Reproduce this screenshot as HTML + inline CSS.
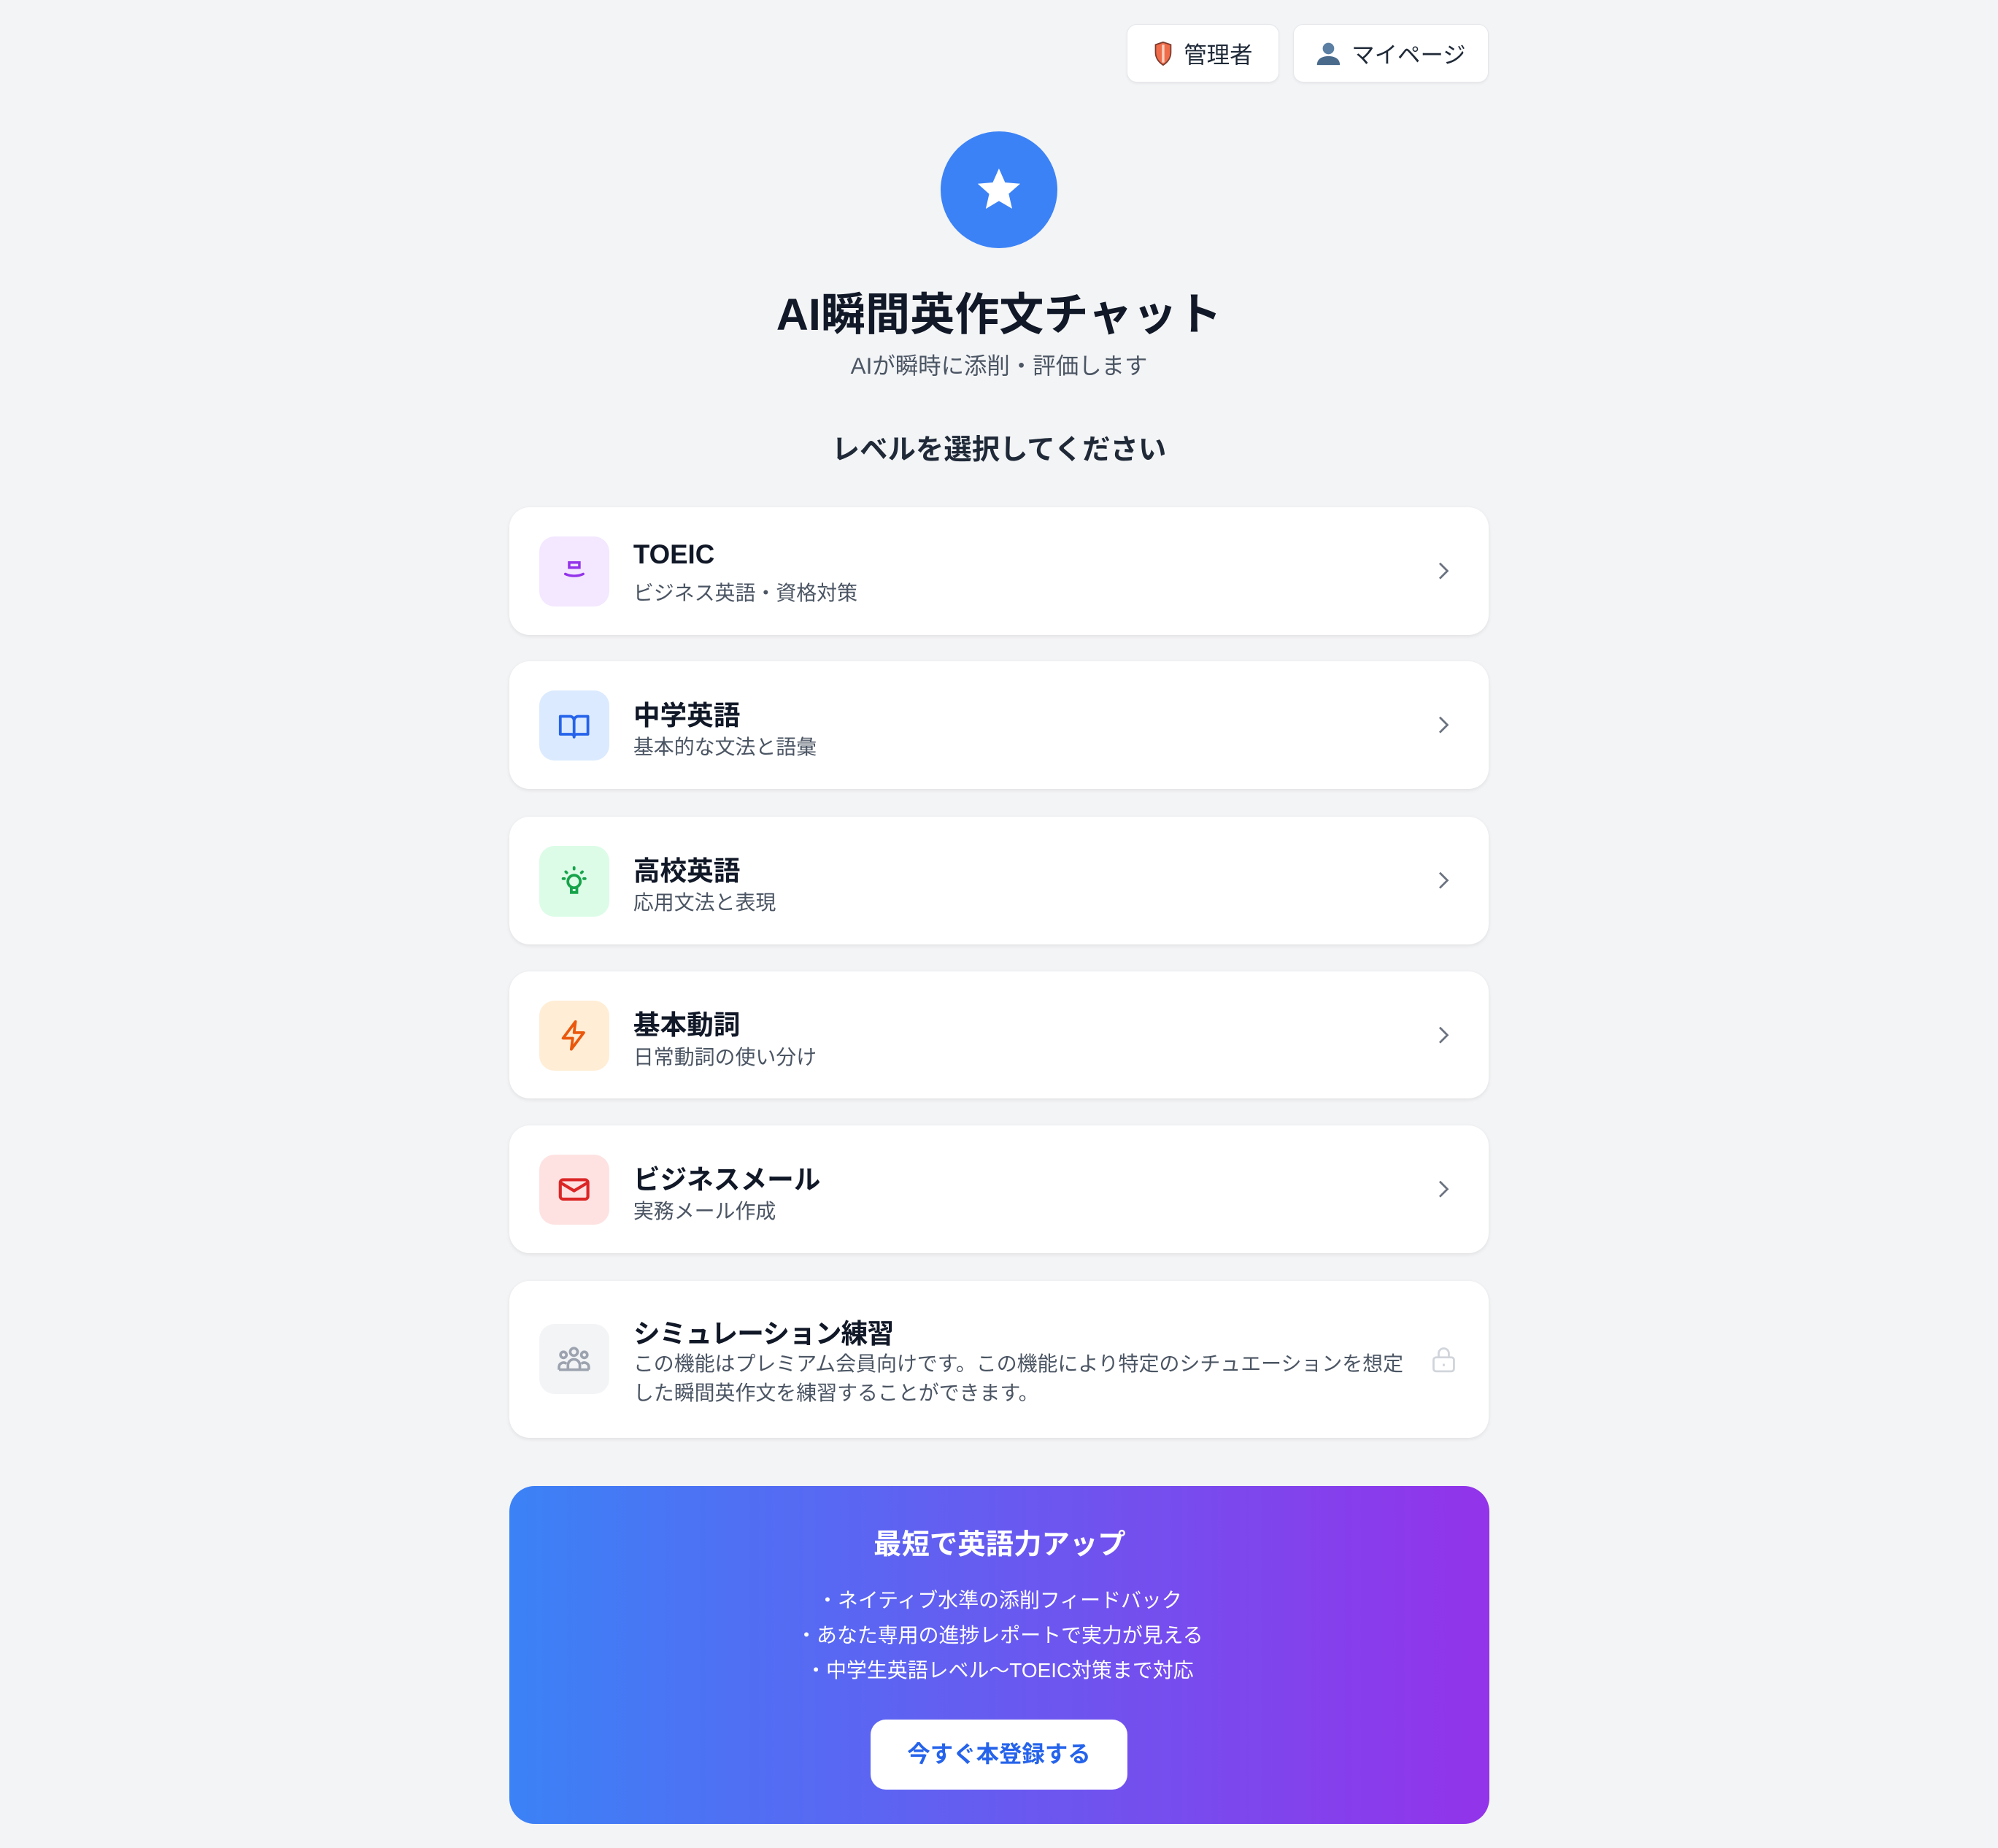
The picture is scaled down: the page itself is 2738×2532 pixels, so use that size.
<!DOCTYPE html>
<html><head><meta charset="utf-8"><style>
html{zoom:1.7462}
body{margin:0;width:1568px;height:1450px;background:#f3f4f6;font-family:"Liberation Sans","Noto Sans CJK JP",sans-serif;position:relative;overflow:hidden;color:#111827}
.btn{position:absolute;top:19px;height:46px;background:#fff;border:1px solid #e5e7eb;border-radius:8px;box-sizing:border-box;display:flex;align-items:center;justify-content:center;font-size:18px;color:#1f2937;gap:8px;box-shadow:0 1px 2px rgba(0,0,0,.05)}
.circle{position:absolute;left:738px;top:103px;width:92px;height:92px;border-radius:50%;background:#3b82f6;display:flex;align-items:center;justify-content:center}
.c{position:absolute;left:0;width:1568px;text-align:center}
.card{position:absolute;left:400px;width:768px;background:#fff;border-radius:16px;box-shadow:0 1px 3px rgba(0,0,0,.08)}
.ib{position:absolute;left:23px;width:55px;height:55px;border-radius:12px;display:flex;align-items:center;justify-content:center}
.t{position:absolute;left:97px;font-size:21px;font-weight:bold;color:#111827}
.s{position:absolute;left:97px;font-size:16px;color:#4b5563}
.ch{position:absolute;left:726px;width:14px;height:14px}
.banner{position:absolute;left:400px;top:1166px;width:769px;height:265px;border-radius:20px;background:linear-gradient(90deg,#3b82f6,#9333ea);color:#fff;text-align:center}
</style></head><body>
<div class="btn" style="left:884px;width:120px"><svg width="16" height="20" viewBox="0 0 16 20"><path d="M8 1L2 3v6c0 5 3 8 6 10 3-2 6-5 6-10V3z" fill="#ef6b4a" stroke="#7a3b2e" stroke-width="1"/><path d="M8 3v14" stroke="#f5d0c0" stroke-width="2"/></svg>管理者</div>
<div class="btn" style="left:1015px;width:153px"><svg width="20" height="20" viewBox="0 0 20 20"><circle cx="10" cy="6" r="4.5" fill="#5b7fa3"/><path d="M1 19c0-5 4-7 9-7s9 2 9 7z" fill="#4a6a8c"/></svg>マイページ</div>
<div class="circle"><svg width="40" height="40" viewBox="0 0 24 24"><path d="M12 2l2.9 6.6 7.1.6-5.4 4.7 1.6 7L12 17.3 5.8 21l1.6-7L2 9.2l7.1-.6z" fill="#fff"/></svg></div>
<div class="c" style="top:218px;font-size:35px;font-weight:bold">AI瞬間英作文チャット</div>
<div class="c" style="top:273px;font-size:18px;color:#4b5563">AIが瞬時に添削・評価します</div>
<div class="c" style="top:335px;font-size:22px;font-weight:bold;color:#1f2937">レベルを選択してください</div>

<div class="card" style="top:398px;height:100px"><div class="ib" style="top:23px;background:#f3e8ff"><svg width="24" height="24" viewBox="0 0 24 24" fill="none" stroke="#9333ea" stroke-width="2" stroke-linecap="round"><rect x="8" y="5" width="8" height="4"/><path d="M5 14c4 2 10 2 14 0"/></svg></div><div class="t" style="top:25px">TOEIC</div><div class="s" style="top:55px">ビジネス英語・資格対策</div><svg class="ch" style="top:43px" viewBox="0 0 14 14"><path d="M4 1l6 6-6 6" fill="none" stroke="#6b7280" stroke-width="1.6"/></svg></div>

<div class="card" style="top:519px;height:100px"><div class="ib" style="top:23px;background:#dbeafe"><svg width="26" height="26" viewBox="0 0 24 24" fill="none" stroke="#2563eb" stroke-width="2" stroke-linejoin="round"><path d="M2 5h7a3 3 0 013 3v12a2 2 0 00-2-2H2zM22 5h-7a3 3 0 00-3 3v12a2 2 0 012-2h8z"/></svg></div><div class="t" style="top:25px">中学英語</div><div class="s" style="top:55px">基本的な文法と語彙</div><svg class="ch" style="top:43px" viewBox="0 0 14 14"><path d="M4 1l6 6-6 6" fill="none" stroke="#6b7280" stroke-width="1.6"/></svg></div>

<div class="card" style="top:641px;height:100px"><div class="ib" style="top:23px;background:#dcfce7"><svg width="26" height="26" viewBox="0 0 24 24" fill="none" stroke="#16a34a" stroke-width="2" stroke-linecap="round"><circle cx="12" cy="12" r="4.5"/><path d="M10 17v3h4v-3M12 2v1M4 10h1M19 10h1M6 5l.7.7M18 5l-.7.7"/></svg></div><div class="t" style="top:25px">高校英語</div><div class="s" style="top:55px">応用文法と表現</div><svg class="ch" style="top:43px" viewBox="0 0 14 14"><path d="M4 1l6 6-6 6" fill="none" stroke="#6b7280" stroke-width="1.6"/></svg></div>

<div class="card" style="top:762px;height:100px"><div class="ib" style="top:23px;background:#ffedd5"><svg width="26" height="26" viewBox="0 0 24 24" fill="none" stroke="#ea580c" stroke-width="2" stroke-linejoin="round"><path d="M13 2L4 14h7l-1 8 9-12h-7z"/></svg></div><div class="t" style="top:25px">基本動詞</div><div class="s" style="top:55px">日常動詞の使い分け</div><svg class="ch" style="top:43px" viewBox="0 0 14 14"><path d="M4 1l6 6-6 6" fill="none" stroke="#6b7280" stroke-width="1.6"/></svg></div>

<div class="card" style="top:883px;height:100px"><div class="ib" style="top:23px;background:#fee2e2"><svg width="26" height="26" viewBox="0 0 24 24" fill="none" stroke="#dc2626" stroke-width="2.2" stroke-linejoin="round"><rect x="2" y="5" width="20" height="14" rx="2"/><path d="M2 7l10 6 10-6"/></svg></div><div class="t" style="top:25px">ビジネスメール</div><div class="s" style="top:55px">実務メール作成</div><svg class="ch" style="top:43px" viewBox="0 0 14 14"><path d="M4 1l6 6-6 6" fill="none" stroke="#6b7280" stroke-width="1.6"/></svg></div>

<div class="card" style="top:1005px;height:123px"><div class="ib" style="top:34px;background:#f3f4f6"><svg width="28" height="28" viewBox="0 0 24 24" fill="none" stroke="#9ca3af" stroke-width="1.8"><circle cx="12" cy="7" r="2.5"/><circle cx="5" cy="9" r="2"/><circle cx="19" cy="9" r="2"/><path d="M8 19v-3a4 4 0 018 0v3zM2 19v-2a3 3 0 015-2M22 19v-2a3 3 0 00-5-2M2 19h20"/></svg></div><div class="t" style="top:24px;letter-spacing:-0.5px">シミュレーション練習</div><div class="s" style="top:54px;line-height:23px;width:615px">この機能はプレミアム会員向けです。この機能により特定のシチュエーションを想定した瞬間英作文を練習することができます。</div><svg style="position:absolute;left:723px;top:51px" width="20" height="22" viewBox="0 0 20 22" fill="none" stroke="#d1d5db" stroke-width="1.6"><rect x="2" y="9" width="16" height="11" rx="2"/><path d="M6 9V6a4 4 0 018 0v3M10 14v2"/></svg></div>

<div class="banner">
<div style="position:absolute;top:28px;width:100%;font-size:22px;font-weight:bold">最短で英語力アップ</div>
<div style="position:absolute;top:76px;width:100%;font-size:16px;line-height:27.5px">・ネイティブ水準の添削フィードバック<br>・あなた専用の進捗レポートで実力が見える<br>・中学生英語レベル〜TOEIC対策まで対応</div>
<div style="position:absolute;left:283px;top:183px;width:202px;height:55px;background:#fff;border-radius:12px;color:#2563eb;font-size:18px;font-weight:bold;line-height:55px">今すぐ本登録する</div>
</div>
</body></html>
